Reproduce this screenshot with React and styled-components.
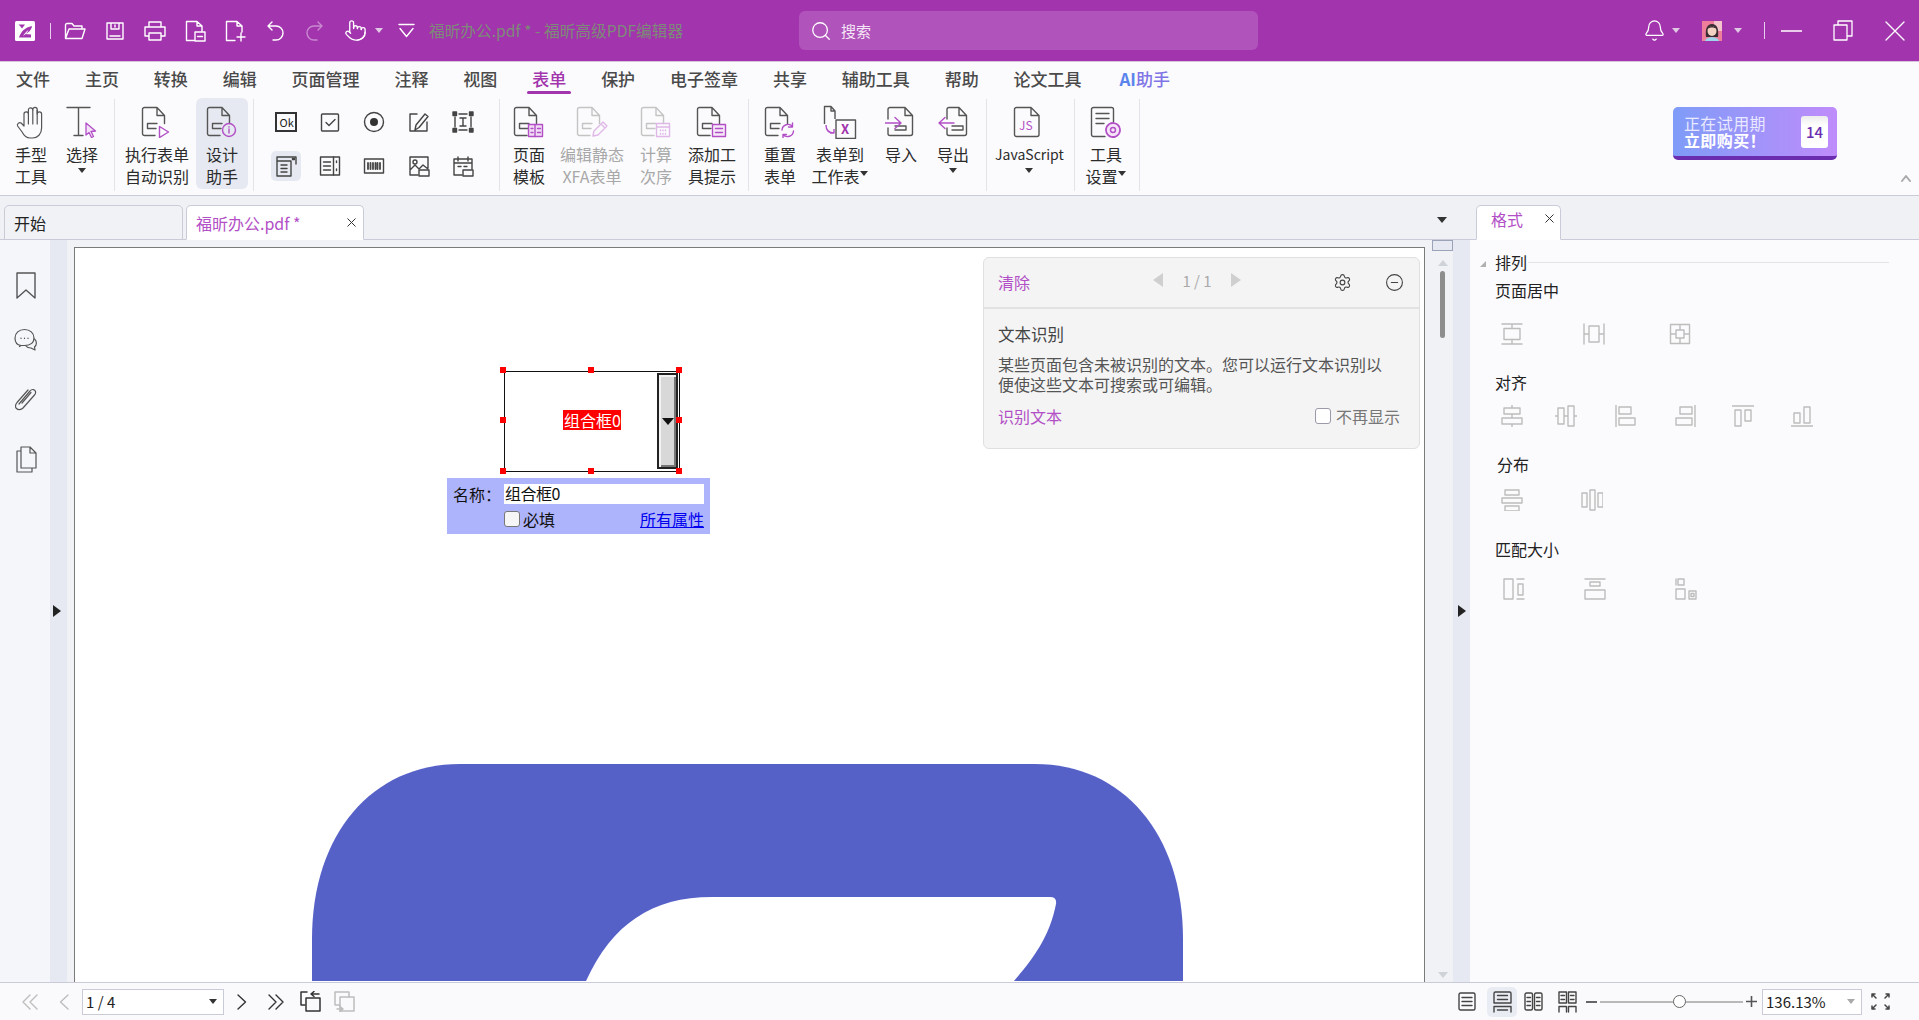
import React from "react";
import styled, { createGlobalStyle } from "styled-components";
import { Pointer, Bell, Search as SearchGlyph, Settings, CircleMinus, X as CloseGlyph } from "lucide-react";

const FONT = `"Noto Sans CJK SC", "Noto Sans", sans-serif`;
const PURPLE = "#a234ad";
const ACCENT = "#b24fc6";
const ACCENT_DIM = "#dfb8e8";
const DARK = "#4d4d4d";
const DIM = "#bdbdbd";

const Global = createGlobalStyle`
  html, body { margin: 0; padding: 0; height: 100%; overflow: hidden; background: #f0f2f6; }
  body { font-family: ${FONT}; font-size: 16px; color: #222; }
  * { box-sizing: border-box; }
  svg { display: block; flex: none; }
`;

const Window = styled.div`
  width: 1919px; height: 1020px; display: flex; flex-direction: column; overflow: hidden;
`;

/* ---------- title bar ---------- */
const TitleBar = styled.header`
  height: 62px; flex: none; display: flex; align-items: center; background: ${PURPLE}; color: #fff;
  border-bottom: 1px solid #d9c2de;
`;
const TitleLeft = styled.div`
  width: 799px; flex: none; display: flex; align-items: center; padding-left: 15px;
`;
const Bar = styled.span`
  width: 1px; height: ${p => p.$h}px; background: #e9cfee; margin-left: ${p => p.$ml}px; flex: none;
`;
const QuickBtn = styled.span`
  width: 40px; height: 30px; display: flex; align-items: center; justify-content: center; flex: none;
  opacity: ${p => (p.$dim ? 0.42 : 1)};
`;
const Tick = styled.span`
  width: 0; height: 0; flex: none; margin-left: ${p => p.$ml || 0}px;
  border-left: 4px solid transparent; border-right: 4px solid transparent;
  border-top: 5px solid ${p => p.$c || "#dfc9e3"};
`;
const DocTitle = styled.span`
  font-size: 15.7px; color: #7d8a78; margin-left: ${p => p.$ml}px; white-space: nowrap;
`;
const SearchBox = styled.div`
  width: 459px; height: 39px; flex: none; border-radius: 6px; background: #b053bb; display: flex;
  align-items: center; padding-left: 11px; gap: 9px; font-size: 15px; color: #f4e6f6;
`;
const TitleRight = styled.div`
  flex: 1; display: flex; align-items: center; padding-left: 385px;
`;
const Spot = styled.span`
  display: flex; flex: none; margin-left: ${p => p.$ml || 0}px;
`;

/* ---------- menu ---------- */
const MenuBar = styled.nav`
  height: 36px; flex: none; display: flex; align-items: flex-start; gap: 34.9px; padding: 5px 0 0 16px; background: #fbfbfd;
`;
const MenuItem = styled.span`
  position: relative; font-size: 17px; line-height: 24px; font-weight: 500; white-space: nowrap;
  margin-left: ${p => p.$ml || 0}px;
  color: ${p => (p.$active ? PURPLE : "#4a4a4a")};
  ${p => p.$active && `&::after { content: ""; position: absolute; left: -5px; right: -5px; top: 24px; height: 3px; border-radius: 2px; background: ${PURPLE}; }`}
`;
const AiMark = styled.span`color: #5b85ec; font-weight: 700;`;
const AiWord = styled.span`color: #7f74e6;`;

/* ---------- ribbon ---------- */
const Ribbon = styled.section`
  height: 98px; flex: none; display: flex; align-items: flex-start; background: #fbfbfd; border-bottom: 1px solid #c9ccd8;
`;
const Group = styled.div`
  height: 92px; margin-top: 1px; flex: none; display: flex; border-right: 1px solid #e3e4ea;
  padding-left: ${p => p.$pl}px; padding-right: ${p => p.$pr}px;
`;
const Tool = styled.div`
  width: ${p => p.$w}px; height: 91px; margin-top: -1px; flex: none; display: flex; flex-direction: column; align-items: center;
  padding-top: 7px; border-radius: 6px; background: ${p => (p.$active ? "#e6e9f1" : "transparent")};
  color: ${p => (p.$dim ? "#a8a8a8" : "#2b2b2b")};
`;
const ToolIcon = styled.div`height: 33px; display: flex; align-items: center; justify-content: center; flex: none;`;
const ToolText = styled.div`
  margin-top: 5px; font-size: ${p => (p.$latin ? 14 : 16)}px; line-height: 22px; text-align: center; white-space: nowrap;
`;
const ToolLine = styled.div`display: flex; align-items: center; justify-content: center; height: 22px;`;
const CaretBelow = styled.div`
  height: 10px; display: flex; justify-content: center; align-items: center;
`;
const CaretDark = styled(Tick).attrs({ $c: "#333" })``;
const InlineCaret = styled(Tick).attrs({ $c: "#333" })`margin-top: -5px; margin-left: 1px;`;
const IconGrid = styled.div`
  display: grid; grid-template-columns: repeat(5, 44.2px); grid-auto-rows: 44px; margin-top: 1px;
`;
const GridCell = styled.div`display: flex; align-items: center; justify-content: center;`;
const GridBtn = styled.div`
  width: 30px; height: 30px; border-radius: 5px; display: flex; align-items: center; justify-content: center;
  background: ${p => (p.$active ? "#e6e9f1" : "transparent")};
`;
const Trial = styled.div`
  margin: 9px 0 0 533px; width: 164px; height: 53px; flex: none; display: flex; align-items: center; justify-content: space-between;
  padding: 0 9px 0 11px; border-radius: 5px; border-bottom: 4px solid #6a2db0;
  background: linear-gradient(90deg, #7f9cf8, #bf8cfb); color: #fff;
`;
const TrialText = styled.div`font-size: 16px; line-height: 17px; letter-spacing: .4px;`;
const TrialLight = styled.div`color: #e9e9ff;`;
const TrialStrong = styled.div`font-weight: 700;`;
const Days = styled.div`
  width: 27px; height: 32px; border-radius: 3px; background: linear-gradient(#ececec, #fff 30%); color: #6a2db0;
  display: flex; align-items: center; justify-content: center; font-size: 15px; font-weight: 500;
`;
const Chevron = styled.div`margin: 76px 0 0 64px; flex: none;`;

/* ---------- tabs ---------- */
const TabRow = styled.div`
  height: 44px; flex: none; display: flex; align-items: flex-end; background: #eff1f5; border-bottom: 1px solid #c9ccd8; padding-left: 4px;
`;
const Tab = styled.div`
  width: ${p => p.$w}px; height: 35px; flex: none; margin-left: ${p => p.$ml || 0}px; margin-bottom: -1px; display: flex; align-items: center; justify-content: space-between;
  padding: 0 ${p => p.$pr}px ${p => p.$pb || 0}px ${p => p.$pl}px; font-size: 16px; border: 1px solid #c9ccd8; border-radius: 5px 5px 0 0;
  background: ${p => (p.$active ? "#fff" : "#f0f2f6")}; color: ${p => (p.$active ? ACCENT : "#222")};
  ${p => p.$active && "border-bottom-color: #fff;"}
`;
const TabMenu = styled(Tick).attrs({ $c: "#333" })`
  margin: 0 0 16px 1073px; border-left-width: 5px; border-right-width: 5px; border-top-width: 6px;
`;

/* ---------- main ---------- */
const Main = styled.main`flex: 1; min-height: 0; display: flex; background: #f0f2f6;`;
const Rail = styled.aside`
  width: 50px; flex: none; background: #f5f6fa; display: flex; flex-direction: column; align-items: center; padding: 32px 0 0 2px;
`;
const RailIcon = styled.div`height: ${p => p.$h}px; display: flex; justify-content: center;`;
const Strip = styled.div`
  width: 17px; flex: none; background: #e6e9f1; display: flex; align-items: center; justify-content: ${p => (p.$left ? "flex-start" : "center")};
  padding-left: ${p => (p.$left ? 3 : 0)}px;
`;
const StripArrow = styled.span`
  width: 0; height: 0; border-top: 6px solid transparent; border-bottom: 6px solid transparent; border-left: 8px solid #222;
`;
const Page = styled.div`
  position: relative; width: 1351px; margin: 7px 0 0 7px; flex: none; background: #fff; overflow: hidden;
  border: 1px solid #7a7a7a; border-bottom: 0;
`;
const LogoArt = styled.svg`display: block; margin: 516px 0 0 237px;`;
const ComboField = styled.div`
  position: absolute; left: 429px; top: 123px; width: 176px; height: 101px; border: 1.5px solid #111; background: #fff;
  display: flex; align-items: center; justify-content: center;
`;
const FieldName = styled.span`
  background: #f00; color: #fff; font-size: 16px; line-height: 20px; padding: 0 0 0 1px; margin-bottom: 3px;
`;
const Dropper = styled.div`
  position: absolute; right: 1px; top: 1px; width: 21px; height: 96px; border: 2.5px solid #222;
  background: #d8d8d8; box-shadow: inset 2px 2px 0 #f2f2f2, inset -2px -2px 0 #777; display: flex; align-items: center; justify-content: center;
`;
const DropTri = styled.span`width: 0; height: 0; border-left: 6px solid transparent; border-right: 6px solid transparent; border-top: 7px solid #111;`;
const Handle = styled.span`
  position: absolute; width: 6px; height: 6px; background: #f00;
  left: ${p => p.$x}px; top: ${p => p.$y}px;
`;
const NameForm = styled.div`
  position: absolute; left: 372px; top: 230px; width: 263px; height: 56px; background: #aeb4fc; font-size: 16px; color: #111;
  display: grid; grid-template-columns: 57px 200px; grid-template-rows: 20px 20px; row-gap: 6px; padding-top: 6px; align-items: center;
`;
const NameLabel = styled.span`padding-left: 6px; line-height: 20px;`;
const NameInput = styled.div`background: #fff; height: 20px; line-height: 18px; font-size: 16px; padding-left: 1px; letter-spacing: -.5px;`;
const NameRow = styled.div`display: flex; align-items: center; justify-content: space-between; grid-column: 2; margin-top: -2px;`;
const ReqGroup = styled.label`display: flex; align-items: center; gap: 3px; font-size: 16px;`;
const Box = styled.span`
  width: 16px; height: 16px; flex: none; display: block; border: 1px solid ${p => p.$c || "#777"}; border-radius: 3px; background: ${p => p.$bg || "#f6f6f6"};
`;
const AllProps = styled.a`color: #0000ee; text-decoration: underline; font-size: 16px;`;

const Notice = styled.aside`
  position: absolute; left: 908px; top: 9px; width: 437px; height: 192px; background: #f4f4f4; border: 1px solid #e0e0e0; border-radius: 6px;
  display: flex; flex-direction: column; color: #555;
`;
const NoticeHead = styled.div`
  height: 51px; flex: none; display: flex; align-items: center; padding: 0 15px 1px 14px; border-bottom: 2px solid #e2e2e2;
`;
const Purple = styled.span`color: ${ACCENT}; font-size: 16px;`;
const Pager = styled.div`
  margin-left: 123px; width: 88px; display: flex; align-items: center; justify-content: space-between; color: #aaa; font-size: 15px; margin-top: -4px;
`;
const PagerArrow = styled.span`
  width: 0; height: 0; border-top: 7px solid transparent; border-bottom: 7px solid transparent;
  ${p => (p.$dir === "l" ? "border-right: 10px solid #cfcfcf;" : "border-left: 10px solid #cfcfcf;")}
`;
const HeadIcons = styled.div`margin-left: auto; display: flex; gap: 33px; color: #444;`;
const NoticeBody = styled.div`padding: 13px 14px 0; display: flex; flex-direction: column;`;
const NoticeTitle = styled.div`font-size: 16.5px; line-height: 24px; color: #444;`;
const NoticeText = styled.p`margin: 8px 0 0; font-size: 16px; line-height: 20px; color: #555; width: 392px;`;
const NoticeFoot = styled.div`display: flex; align-items: center; justify-content: space-between; margin-top: 10px; padding-right: 5px;`;
const Again = styled.label`display: flex; align-items: center; gap: 5px; color: #777; font-size: 16px; line-height: 24px;`;

const Scroll = styled.div`
  width: 21px; flex: none; margin-left: 7px; display: flex; flex-direction: column; align-items: center;
`;
const ScrollCap = styled.div`width: 21px; height: 11px; flex: none; background: #e6e9f1; border: 1px solid #9aa3b8;`;
const ScrollUp = styled.span`
  width: 0; height: 0; margin-top: 9px; border-left: 5px solid transparent; border-right: 5px solid transparent; border-bottom: 6px solid #cfd2d8;
`;
const Thumb = styled.div`width: 5px; height: 67px; margin-top: 5px; border-radius: 3px; background: #8d8d8d;`;
const ScrollDown = styled.span`
  width: 0; height: 0; margin-top: auto; margin-bottom: 4px; border-left: 5px solid transparent; border-right: 5px solid transparent; border-top: 6px solid #cfd2d8;
`;

const Panel = styled.aside`
  flex: 1; min-width: 0; background: #fbfbfd; padding: 12px 30px 0 25px; color: #222; font-size: 16px;
`;
const PanelHead = styled.div`display: flex; align-items: center; height: 20px; margin-left: -15px; width: 409px;`;
const PanelTri = styled.span`
  width: 0; height: 0; border-left: 6px solid transparent; border-bottom: 6px solid #b0b0b0; margin-right: 9px; margin-top: 3px;
`;
const PanelHeadText = styled.span`line-height: 20px;`;
const PanelRule = styled.span`flex: 1; height: 1px; background: #e4e4e8; margin-left: 1px;`;
const SectionLabel = styled.div`line-height: 20px; margin-top: ${p => p.$mt}px; margin-left: ${p => p.$ml || 0}px;`;
const IconRow = styled.div`
  display: grid; grid-template-columns: ${p => p.$cols}; justify-items: start; margin-top: ${p => p.$mt}px; height: 22px; width: 340px; margin-left: ${p => p.$ml || 6}px;
`;

/* ---------- status ---------- */
const Status = styled.footer`
  height: 38px; flex: none; background: #fafafc; border-top: 1px solid #c9ccd8; display: flex; align-items: center; color: #444;
`;
const PageCombo = styled.div`
  width: ${p => p.$w}px; height: 26px; flex: none; margin-left: ${p => p.$ml}px; background: #fff; border: 1px solid #c9ccd8; display: flex; align-items: center; justify-content: space-between;
  padding: 0 6px 0 3px; font-size: 15px; color: #222;
`;
const ViewBtn = styled.span`
  width: 30px; height: 30px; flex: none; margin-left: ${p => p.$ml || 0}px; border-radius: 5px; display: flex; align-items: center; justify-content: center;
  background: ${p => (p.$active ? "#e9ecf3" : "transparent")};
`;
const Track = styled.div`position: relative; width: 143px; height: 2px; flex: none; margin-left: 3px; background: #b9b9b9;`;
const Knob = styled.span`
  position: absolute; left: 73px; top: -6px; width: 13px; height: 13px; border-radius: 50%; background: #fff; border: 1px solid #666;
`;

/* ---------- icons ---------- */
const S = ({ w, h, c = DARK, sw = 1.4, children, fill = "none" }) => (
  <svg width={w} height={h} viewBox={`0 0 ${w} ${h}`} fill={fill} stroke={c} strokeWidth={sw} strokeLinejoin="round" strokeLinecap="round">{children}</svg>
);

const FoxLogo = () => (
  <svg width="20" height="20" viewBox="0 0 20 20">
    <rect width="20" height="20" rx="1.5" fill="#fff" />
    <path d="M3.5 3.5H10L7 7.500C6 6 5 5 3.500 3.500Z" fill={PURPLE} />
    <path d="M4 16.500C6 10.500 10 6.500 17 5 16.500 9 13.500 12 9.500 13L16 13.500V16.500H4Z" fill={PURPLE} />
    <path d="M8 15C9.500 12.500 11 10.500 13.500 9 12.500 11 11 13 8 15Z" fill="#fff" />
  </svg>
);
const W = "#fff";
const IOpen = () => <S w={22} h={18} c={W}><path d="M1.5 16.5V3a1.5 1.5 0 0 1 1.5-1.5h5L10 4h8v3M1.5 16.5 5 7h16l-3 9.5z" /></S>;
const ISave = () => <S w={18} h={18} c={W}><path d="M1 1h16v16H1zM5 1v6h8V1M9 3v2M4 14h10" /></S>;
const IPrint = () => <S w={22} h={20} c={W}><path d="M5 6V1h12v5M5 15H1V6h20v9h-4M5 12h12v7H5z" /></S>;
const IPageMinus = () => <S w={21} h={22} c={W}><path d="M9 20.5H1.5v-19H12L17 6v5M12 1.5V6h5M10 12h10v9H10zM12.5 16.5h5" /></S>;
const IPagePlus = () => <S w={21} h={22} c={W}><path d="M10 20.5H1.5v-19H12L17 6v6M12 1.5V6h5M16 13v8M12 17h8" /></S>;
const IUndo = () => <S w={18} h={20} c={W}><path d="M6 1 2 5l4 4M2 5h8a7 7 0 0 1 0 14H7" /></S>;
const IRedo = () => <S w={18} h={20} c={W}><path d="M12 1l4 4-4 4M16 5H8a7 7 0 0 0 0 14h3" /></S>;
const IDown = () => <S w={17} h={15} c={W}><path d="M1 1.5h15M2 5.5l6.500 8 6.500-8" /></S>;
const IRestore = () => <S w={20} h={21} c={W} sw={1.3}><path d="M5 5V1h14v15h-5M1 5h13v15H1z" /></S>;
const IMin = () => <S w={21} h={2} c={W} sw={1.5}><path d="M0 1h21" /></S>;
const IClose = () => <S w={20} h={20} c={W} sw={1.3}><path d="M1 1l18 18M19 1 1 19" /></S>;

const Avatar = () => (
  <svg width="20" height="20" viewBox="0 0 20 20">
    <rect width="20" height="20" fill="#ee7e9a" />
    <rect x="12" width="8" height="10" fill="#f4c3cc" />
    <path d="M4 16C3 8 5 3 10 3s7 5 6 13z" fill="#3a2c33" />
    <ellipse cx="10" cy="10" rx="4.5" ry="5" fill="#f3d2c4" />
    <path d="M5 8c1-4 9-4 10 0-3-2-7-2-10 0z" fill="#3a2c33" />
    <path d="M3 20c1-5 13-5 14 0z" fill="#9ed5ec" />
  </svg>
);

const IHand = () => (
  <S w={30} h={34} c="#555" sw={1.2}>
    <path d="M8 21V9a2.200 2.200 0 0 1 4.400 0V5a2.200 2.200 0 0 1 4.400 0v-.5a2.200 2.200 0 0 1 4.400 0V9a2.200 2.200 0 0 1 4.400 0v14c0 6-4 10-9 10h-2.500c-4 0-6-2-8-6l-4.500-6c-1-2 1.500-4 3.500-3z" />
    <path d="M12.400 9v10M16.800 5v14M21.200 5v14" />
  </S>
);

const DOC = "M14 29.5H3.5a2 2 0 0 1-2-2v-24a2 2 0 0 1 2-2H16l7.5 8v8M16 1.5v8h7.5";
const FORM = "M16 17.5H6.5v5H15";
const Doc = ({ dim, children, lines = true, d = DOC }) => {
  const base = dim ? "#c4c4c4" : "#555";
  return (
    <svg width="32" height="32" viewBox="0 0 32 32" fill="none" stroke={base} strokeWidth="1.4" strokeLinejoin="round" strokeLinecap="round">
      <path d={d} />
      {lines && <path d={FORM} />}
      <g stroke={dim ? ACCENT_DIM : ACCENT} strokeWidth="1.4">{children}</g>
    </svg>
  );
};
const DocPlay = () => <Doc><path d="M18.5 20.5 27.5 26l-9 5.5z" /></Doc>;
const DocInfo = () => <Doc><circle cx="23" cy="24" r="6.5" /><path d="M23 23v4M23 20.8v.3" /></Doc>;
const DocTable = () => <Doc><rect x="15.5" y="18.5" width="14" height="12" fill="#f0dcf4" /><path d="M22 18.5v12M18 22.5h2M18 26.5h2M24.5 22.5h3M24.5 26.5h3" /></Doc>;
const DocPencil = () => <Doc dim><path d="M17 30l1-5 9-9 4 4-9 9zM25 18l4 4" /></Doc>;
const DocCalc = () => <Doc dim><rect x="16.5" y="17.5" width="13" height="13" /><path d="M16.5 21h13M20.5 24v.8M23 24v.8M25.5 24v.8M20.5 27.5v.8M23 27.5v.8M25.5 27.5v.8" /></Doc>;
const DocNote = () => <Doc><rect x="16.5" y="18.5" width="13" height="12" fill="#f6e9f8" /><path d="M19.5 22.5h7M19.5 26.5h7" /></Doc>;
const DocRefresh = () => <Doc><path d="M18 24a6 6 0 0 1 10.5-3.5M28.5 17v4h-4M29.5 25a6 6 0 0 1-10.5 3.5M19 32v-3.5h3.5" /></Doc>;
const DocExcel = () => (
  <svg width="34" height="34" viewBox="0 0 34 34" fill="none" stroke="#555" strokeWidth="1.4" strokeLinejoin="round">
    <path d="M1.5 19V1.5H8l4 4.5v8M8 1.5V6h4" />
    <path d="M13 15h19.5v18.5H13z" />
    <path d="M3 20c0 5 3 8 8 8M7 28h4v-4" stroke={ACCENT} />
    <text x="18" y="29" fontFamily={FONT} fontSize="13" fontWeight="700" fill={PURPLE} stroke="none">X</text>
  </svg>
);
const DocImport = () => <Doc lines={false} d="M3 13V3.5a2 2 0 0 1 2-2h15l7.5 8v18a2 2 0 0 1-2 2H5a2 2 0 0 1-2-2V22M20 1.5v8h7.5M10 24h11v-4H10"><path d="M0 17h15M10 11.5 16 17l-6 5.5" /></Doc>;
const DocExport = () => <Doc lines={false} d="M10 13V3.5a2 2 0 0 1 2-2h10l7.5 8v18a2 2 0 0 1-2 2H12a2 2 0 0 1-2-2V22M22 1.5v8h7.5M15 24h11v-4H15"><path d="M17 17H2M8 11.5 2 17l6 5.5" /></Doc>;
const DocJS = () => (
  <Doc lines={false} d="M3.5 30.5a2 2 0 0 1-2-2V3.5a2 2 0 0 1 2-2H18l8 8v19a2 2 0 0 1-2 2zM18 1.5v8h8">
    <text x="6" y="24" fontFamily={FONT} fontSize="12" stroke="none" fill={ACCENT}>JS</text>
  </Doc>
);
const DocGear = () => (
  <Doc lines={false} d="M15 30.5H3.5a2 2 0 0 1-2-2V3.5a2 2 0 0 1 2-2h18a2 2 0 0 1 2 2V16M6 7.5h13M6 12.5h13M6 17.5h8">
    <circle cx="23" cy="24" r="7" strokeDasharray="3 1.2" strokeWidth="1.8" fill="#f6e4f9" />
    <circle cx="23" cy="24" r="2.5" />
  </Doc>
);
const ITextSel = () => (
  <svg width="32" height="32" viewBox="0 0 32 32" fill="none" strokeLinejoin="round" strokeLinecap="round">
    <path d="M1 1.5h23M12.5 1.5v28M8 29.5h9" stroke="#555" strokeWidth="1.4" />
    <path d="M20 17l9.5 8-4.5.5 2.5 5-2 1-2.5-5L20 29z" stroke={ACCENT} strokeWidth="1.3" fill="#f4e3f8" />
  </svg>
);

const G = ({ children }) => <S w={22} h={22} c="#444" sw={1.4}>{children}</S>;
const IOk = () => (
  <svg width="22" height="20" viewBox="0 0 22 20" fill="none" stroke="#333" strokeWidth="2">
    <rect x="1" y="1" width="20" height="18" />
    <text x="4.500" y="14.500" fontFamily={FONT} fontSize="11" stroke="none" fill="#222">Ok</text>
  </svg>
);
const IChk = () => <G><rect x="2.5" y="3" width="17" height="17" rx="1" /><path d="M7 11.5l3 3 6-6" /></G>;
const IRadio = () => <G><circle cx="11" cy="11" r="9.5" /><circle cx="11" cy="11" r="4" fill="#333" stroke="none" /></G>;
const ISign = () => <G><path d="M9 3H2v17h17v-9M7 19l1-5 9-11 3 2.5-9 11z" /></G>;
const IText = () => <G><path d="M3 6v10M19 6v10M7 3h8M7 19h8M8 7h6M11 7v8M8 15h6" /><rect x="1" y="1" width="3.500" height="3.500" fill="#444" /><rect x="17.500" y="1" width="3.500" height="3.500" fill="#444" /><rect x="1" y="17.500" width="3.500" height="3.500" fill="#444" /><rect x="17.500" y="17.500" width="3.500" height="3.500" fill="#444" /></G>;
const IDrop = () => <G><path d="M2 2h19v7M2 2v19h14V6H2M6 10h6M6 13.5h6M6 17h6" /><path d="M17.5 3.5h2v1h-2z" fill="#444" /></G>;
const IList = () => <G><rect x="1.5" y="2" width="19" height="18" /><path d="M14.5 2v18M4.5 7h7M4.5 11h7M4.5 15h7M17.5 6v1.5M17.5 14v1.5" /></G>;
const IBar = () => <G><rect x="1.5" y="4" width="19" height="14" /><path d="M5 8v6M7.5 8v6M10 8v6M12.5 8v6M14.5 8v6M17 8v6" strokeWidth="1.8" /></G>;
const IImg = () => <G><path d="M10 20H2V2h18v11M2 15l5-5 4 4 4-4 5 4" /><circle cx="7" cy="7" r="2" /><rect x="11" y="15" width="10" height="6" /></G>;
const IDate = () => <G><path d="M10 20H2V4h18v10M2 8h18M6 2v4M16 2v4M6 11.5h3M12 11.5h3" /><rect x="11" y="15" width="10" height="6" /></G>;

const Al = ({ children }) => <S w={22} h={22} c={DIM} sw={1.4}>{children}</S>;
const kinds = {
  c1: <path d="M1 1h20M1 21h20M11 1v4M11 17v4M3 5.500h16v11H3z" />,
  c2: <path d="M1 1v20M21 1v20M1 11h4M17 11h4M6 3h10v16H6z" />,
  c3: <path d="M1.5 1.5h19v19h-19zM7 7h8v8H7zM11 1.5V7M11 15v5.5M1.5 11H7M15 11h5.5" />,
  a1: <path d="M3 3h16v6H3zM1 13h20v6H1zM11 0v3M11 9v4M11 19v3" />,
  a2: <path d="M3 3h6v16H3zM13 1h6v20h-6zM0 11h3M9 11h4M19 11h3" />,
  a3: <path d="M1 0v22M4 2h12v7H4zM4 13h16v7H4z" />,
  a4: <path d="M21 0v22M6 2h12v7H6zM2 13h16v7H2z" />,
  a5: <path d="M0 1h22M3 5h6v16H3zM13 5h6v11h-6z" />,
  a6: <path d="M0 21h22M3 8h6v10H3zM13 2h6v16h-6z" />,
  d1: <path d="M4 1h14v5H4zM1 9h20v5H1zM4 17h14v5H4z" />,
  d2: <path d="M1 4h5v14H1zM9 1h5v20H9zM17 4h5v14h-5z" />,
  m1: <path d="M1 1h9v20H1zM15 6h5v11h-5zM14 1h7M14 21h7" />,
  m2: <path d="M1 12h20v9H1zM6 4h10v4H6zM1 1h20" />,
  m3: <path d="M1 11h9v10H1zM3 1h6v6H3zM14 13h7v8h-7zM16 15.500h3v3h-3zM1 1v6" />,
};
const AlignIcon = ({ k }) => <Al>{kinds[k]}</Al>;

const IFirst = ({ dim }) => <S w={16} h={16} c={dim ? DIM : "#333"}><path d="M8 1 1 8l7 7M15 1 8 8l7 7" /></S>;
const ILast = ({ dim }) => <S w={16} h={16} c={dim ? DIM : "#333"}><path d="M1 1l7 7-7 7M8 1l7 7-7 7" /></S>;
const IPrev = () => <S w={10} h={16} c={DIM}><path d="M9 1 1.5 8 9 15" /></S>;
const INext = () => <S w={10} h={16} c="#333"><path d="M1 1l7.5 7L1 15" /></S>;
const ISwap = ({ dim }) => (
  <S w={21} h={21} c={dim ? DIM : "#333"} sw={1.5}>
    {dim
      ? <><path d="M6 14H1V1h14v5" /><rect x="6" y="6" width="14" height="14" /><path d="M3 18h6M6 15.5 9 18l-3 2.500" /></>
      : <><path d="M5 14H1V1h6" /><rect x="6" y="7" width="14" height="13" /><path d="M19 3h-8M14 .5 11 3l3 2.500" /></>}
  </S>
);
const VSingle = () => <S w={18} h={19} c="#444"><rect x="1" y="1" width="16" height="17" rx="1.500" /><path d="M4 5.500h10M4 9.500h10M4 13.500h10" /></S>;
const VCont = () => <S w={19} h={22} c="#444"><path d="M1 12V2.500A1.500 1.500 0 0 1 2.500 1h14A1.500 1.500 0 0 1 18 2.500V12zM4.500 4.500h10M4.500 8.500h10M1 21v-5.500h17V21M4.500 19h10" /></S>;
const VTwo = () => <S w={19} h={19} c="#444"><rect x="1" y="1" width="7.500" height="17" rx="1.500" /><rect x="10.500" y="1" width="7.500" height="17" rx="1.500" /><path d="M3 5.500h3.500M3 9.500h3.500M3 13.500h3.500M12.500 5.500H16M12.500 9.500H16M12.500 13.500H16" /></S>;
const VTwoCont = () => <S w={19} h={22} c="#444"><path d="M1 12V1h7.500v11zM10.500 12V1H18v11zM3 4.500h3.500M3 8.500h3.500M12.500 4.500H16M12.500 8.500H16M1 21v-5.500h7.500V21M10.500 21v-5.500H18V21" /></S>;
const IFull = () => <S w={19} h={17} c="#444" sw={1.5}><path d="M1 1l4 4M1 4V1h3M18 1l-4 4M18 4V1h-3M1 16l4-4M1 13v3h3M18 16l-4-4M18 13v3h-3" /></S>;

const tools = {
  a: [
    { w: 50, icon: <IHand />, t: ["手型", "工具"] },
    { w: 52, icon: <ITextSel />, t: ["选择"], below: true },
  ],
  b: [
    { w: 78, icon: <DocPlay />, t: ["执行表单", "自动识别"] },
    { w: 52, icon: <DocInfo />, t: ["设计", "助手"], active: true },
  ],
  c: [
    { w: 48, icon: <DocTable />, t: ["页面", "模板"] },
    { w: 78, icon: <DocPencil />, t: ["编辑静态", "XFA表单"], dim: true },
    { w: 50, icon: <DocCalc />, t: ["计算", "次序"], dim: true },
    { w: 62, icon: <DocNote />, t: ["添加工", "具提示"] },
  ],
  d: [
    { w: 48, icon: <DocRefresh />, t: ["重置", "表单"] },
    { w: 72, icon: <DocExcel />, t: ["表单到", "工作表"], inline: true },
    { w: 50, icon: <DocImport />, t: ["导入"] },
    { w: 54, icon: <DocExport />, t: ["导出"], below: true },
  ],
  e: [{ w: 85, icon: <DocJS />, t: ["JavaScript"], below: true, latin: true }],
  f: [{ w: 60, icon: <DocGear />, t: ["工具", "设置"], inline: true }],
};

const ToolView = ({ w, icon, t, below, inline, active, dim, latin }) => (
  <Tool $w={w} $active={active} $dim={dim}>
    <ToolIcon>{icon}</ToolIcon>
    <ToolText $latin={latin}>
      {t.map((line, i) => (
        <ToolLine key={line}>{line}{inline && i === t.length - 1 && <InlineCaret />}</ToolLine>
      ))}
      {below && <CaretBelow><CaretDark /></CaretBelow>}
    </ToolText>
  </Tool>
);

const MENU = ["文件", "主页", "转换", "编辑", "页面管理", "注释", "视图", "表单", "保护", "电子签章", "共享", "辅助工具", "帮助", "论文工具"];
const GRID = [<IOk />, <IChk />, <IRadio />, <ISign />, <IText />, <IDrop />, <IList />, <IBar />, <IImg />, <IDate />];
const HANDLES = [[-3, -3], [85, -3], [173, -3], [-3, 47], [173, 47], [-3, 98], [85, 98], [173, 98]];

export default function App() {
  return (
    <Window>
      <Global />
      <TitleBar>
        <TitleLeft>
          <FoxLogo />
          <Bar $h={16} $ml={15} />
          <Spot $ml={4} />
          <QuickBtn><IOpen /></QuickBtn>
          <QuickBtn><ISave /></QuickBtn>
          <QuickBtn><IPrint /></QuickBtn>
          <QuickBtn><IPageMinus /></QuickBtn>
          <QuickBtn><IPagePlus /></QuickBtn>
          <QuickBtn><IUndo /></QuickBtn>
          <QuickBtn $dim><IRedo /></QuickBtn>
          <QuickBtn><Pointer size={23} strokeWidth={1.4} color="#fff" /></QuickBtn>
          <Tick />
          <Spot $ml={15}><IDown /></Spot>
          <DocTitle $ml={14}>福昕办公.pdf * - 福昕高级PDF编辑器</DocTitle>
        </TitleLeft>
        <SearchBox>
          <SearchGlyph size={22} strokeWidth={1.4} color="#fff" />
          搜索
        </SearchBox>
        <TitleRight>
          <Bell size={23} strokeWidth={1.3} color="#fff" />
          <Tick $ml={6} />
          <Spot $ml={22}><Avatar /></Spot>
          <Tick $ml={12} />
          <Bar $h={17} $ml={22} />
          <Spot $ml={16}><IMin /></Spot>
          <Spot $ml={31}><IRestore /></Spot>
          <Spot $ml={32}><IClose /></Spot>
        </TitleRight>
      </TitleBar>

      <MenuBar>
        {MENU.map(m => <MenuItem key={m} $active={m === "表单"}>{m}</MenuItem>)}
        <MenuItem $ml={3}><AiMark>AI</AiMark><AiWord>助手</AiWord></MenuItem>
      </MenuBar>

      <Ribbon>
        <Group $pl={6} $pr={6}>{tools.a.map(t => <ToolView key={t.t[0]} {...t} />)}</Group>
        <Group $pl={3} $pr={5}>{tools.b.map(t => <ToolView key={t.t[0]} {...t} />)}</Group>
        <Group $pl={10} $pr={14}>
          <IconGrid>
            {GRID.map((g, i) => <GridCell key={i}><GridBtn $active={i === 5}>{g}</GridBtn></GridCell>)}
          </IconGrid>
        </Group>
        <Group $pl={5} $pr={5}>{tools.c.map(t => <ToolView key={t.t[0]} {...t} />)}</Group>
        <Group $pl={7} $pr={6}>{tools.d.map(t => <ToolView key={t.t[0]} {...t} />)}</Group>
        <Group $pl={0} $pr={2}>{tools.e.map(t => <ToolView key={t.t[0]} {...t} />)}</Group>
        <Group $pl={1} $pr={3}>{tools.f.map(t => <ToolView key={t.t[0]} {...t} />)}</Group>
        <Trial>
          <TrialText>
            <TrialLight>正在试用期</TrialLight>
            <TrialStrong>立即购买！</TrialStrong>
          </TrialText>
          <Days>14</Days>
        </Trial>
        <Chevron><S w={10} h={8} c="#aaa" sw={2}><path d="M1 7l4-5 4 5" /></S></Chevron>
      </Ribbon>

      <TabRow>
        <Tab $w={179} $pl={9} $pr={9}>开始</Tab>
        <Tab $w={178} $ml={3} $pl={9} $pr={4} $active>
          福昕办公.pdf *
          <CloseGlyph size={15} strokeWidth={1.6} color="#333" />
        </Tab>
        <TabMenu />
        <Tab $w={85} $ml={29} $pl={14} $pr={3} $pb={8} $active>
          格式
          <CloseGlyph size={15} strokeWidth={1.6} color="#333" />
        </Tab>
      </TabRow>

      <Main>
        <Rail>
          <RailIcon $h={56}><S w={20} h={27} c="#555"><path d="M1 1h18v25l-9-8-9 8z" /></S></RailIcon>
          <RailIcon $h={59}>
            <S w={24} h={23} c="#555" sw={1.2}>
              <path d="M7 17.500C3 17 1 14 1 10 1 5 5 1.500 10.500 1.500S20 5 20 10s-4 7.500-9.500 7.500H7l-1.500 1 1.500-1z" />
              <path d="M20.500 11c2.500 2 2.500 6 0 8l.5 3-4-2c-2 0-4-.5-5-2M7 10v.5M10.500 10v.5M14 10v.5" />
            </S>
          </RailIcon>
          <RailIcon $h={59}>
            <S w={22} h={24} c="#555" sw={1.2}>
              <path d="M4 17 15 4c2-2.500 5-1.500 5.500.5.300 1.500 0 2.500-1 3.500L8 21c-2 2-5 2-6.500.5S.5 17.500 2 15.500L13 3" />
              <path d="M7 16l9-10.500" />
            </S>
          </RailIcon>
          <RailIcon $h={40}>
            <S w={21} h={27} c="#555" sw={1.2}>
              <path d="M5 22V1h9l6 6v15zM14 1v6h6M5 5H1v21h15v-4" />
            </S>
          </RailIcon>
        </Rail>
        <Strip $left><StripArrow /></Strip>

        <Page>
          <LogoArt width="871" height="217" viewBox="0 0 871 217">
            <path d="M0 217V175C0 70 60 0 148 0H723C811 0 871 70 871 175V217Z" fill="#5661c8" />
            <path d="M274 217C300 160 340 133 400 133H738Q745 133 744 140C738 170 725 190 702 217Z" fill="#fff" />
          </LogoArt>

          <ComboField>
            <FieldName>组合框0</FieldName>
            <Dropper><DropTri /></Dropper>
            {HANDLES.map(([x, y]) => <Handle key={`${x}-${y}`} $x={x - 2} $y={y - 2} />)}
          </ComboField>

          <NameForm>
            <NameLabel>名称：</NameLabel>
            <NameInput>组合框0</NameInput>
            <NameRow>
              <ReqGroup><Box />必填</ReqGroup>
              <AllProps>所有属性</AllProps>
            </NameRow>
          </NameForm>

          <Notice>
            <NoticeHead>
              <Purple>清除</Purple>
              <Pager><PagerArrow $dir="l" />1 / 1<PagerArrow $dir="r" /></Pager>
              <HeadIcons>
                <Settings size={19} strokeWidth={1.4} />
                <CircleMinus size={19} strokeWidth={1.4} />
              </HeadIcons>
            </NoticeHead>
            <NoticeBody>
              <NoticeTitle>文本识别</NoticeTitle>
              <NoticeText>某些页面包含未被识别的文本。您可以运行文本识别以便使这些文本可搜索或可编辑。</NoticeText>
              <NoticeFoot>
                <Purple>识别文本</Purple>
                <Again><Box $c="#9a9aaa" $bg="#fff" />不再显示</Again>
              </NoticeFoot>
            </NoticeBody>
          </Notice>
        </Page>

        <Scroll>
          <ScrollCap />
          <ScrollUp />
          <Thumb />
          <ScrollDown />
        </Scroll>
        <Strip><StripArrow /></Strip>

        <Panel>
          <PanelHead><PanelTri /><PanelHeadText>排列</PanelHeadText><PanelRule /></PanelHead>
          <SectionLabel $mt={8}>页面居中</SectionLabel>
          <IconRow $cols="82px 86px 22px" $mt={23}>
            <AlignIcon k="c1" /><AlignIcon k="c2" /><AlignIcon k="c3" />
          </IconRow>
          <SectionLabel $mt={27}>对齐</SectionLabel>
          <IconRow $cols="54px 60px 59px 58px 59px 22px" $mt={13}>
            <AlignIcon k="a1" /><AlignIcon k="a2" /><AlignIcon k="a3" /><AlignIcon k="a4" /><AlignIcon k="a5" /><AlignIcon k="a6" />
          </IconRow>
          <SectionLabel $mt={27} $ml={2}>分布</SectionLabel>
          <IconRow $cols="80px 22px" $mt={15}>
            <AlignIcon k="d1" /><AlignIcon k="d2" />
          </IconRow>
          <SectionLabel $mt={28}>匹配大小</SectionLabel>
          <IconRow $cols="81px 91px 22px" $mt={19} $ml={8}>
            <AlignIcon k="m1" /><AlignIcon k="m2" /><AlignIcon k="m3" />
          </IconRow>
        </Panel>
      </Main>

      <Status>
        <Spot $ml={22}><IFirst dim /></Spot>
        <Spot $ml={21}><IPrev /></Spot>
        <PageCombo $w={142} $ml={13}>1 / 4<CaretDark /></PageCombo>
        <Spot $ml={13}><INext /></Spot>
        <Spot $ml={21}><ILast /></Spot>
        <Spot $ml={16}><ISwap /></Spot>
        <Spot $ml={13}><ISwap dim /></Spot>
        <Spot $ml={1103}><VSingle /></Spot>
        <ViewBtn $ml={11} $active><VCont /></ViewBtn>
        <ViewBtn $ml={1}><VTwo /></ViewBtn>
        <ViewBtn $ml={4}><VTwoCont /></ViewBtn>
        <Spot $ml={4}><S w={11} h={2} c="#666" sw={2}><path d="M0 1h11" /></S></Spot>
        <Track><Knob /></Track>
        <Spot $ml={3}><S w={11} h={11} c="#555" sw={1.6}><path d="M0 5.500h11M5.500 0v11" /></S></Spot>
        <PageCombo $w={100} $ml={5}>136.13%<Tick $c="#aaa" /></PageCombo>
        <Spot $ml={9}><IFull /></Spot>
      </Status>
    </Window>
  );
}
